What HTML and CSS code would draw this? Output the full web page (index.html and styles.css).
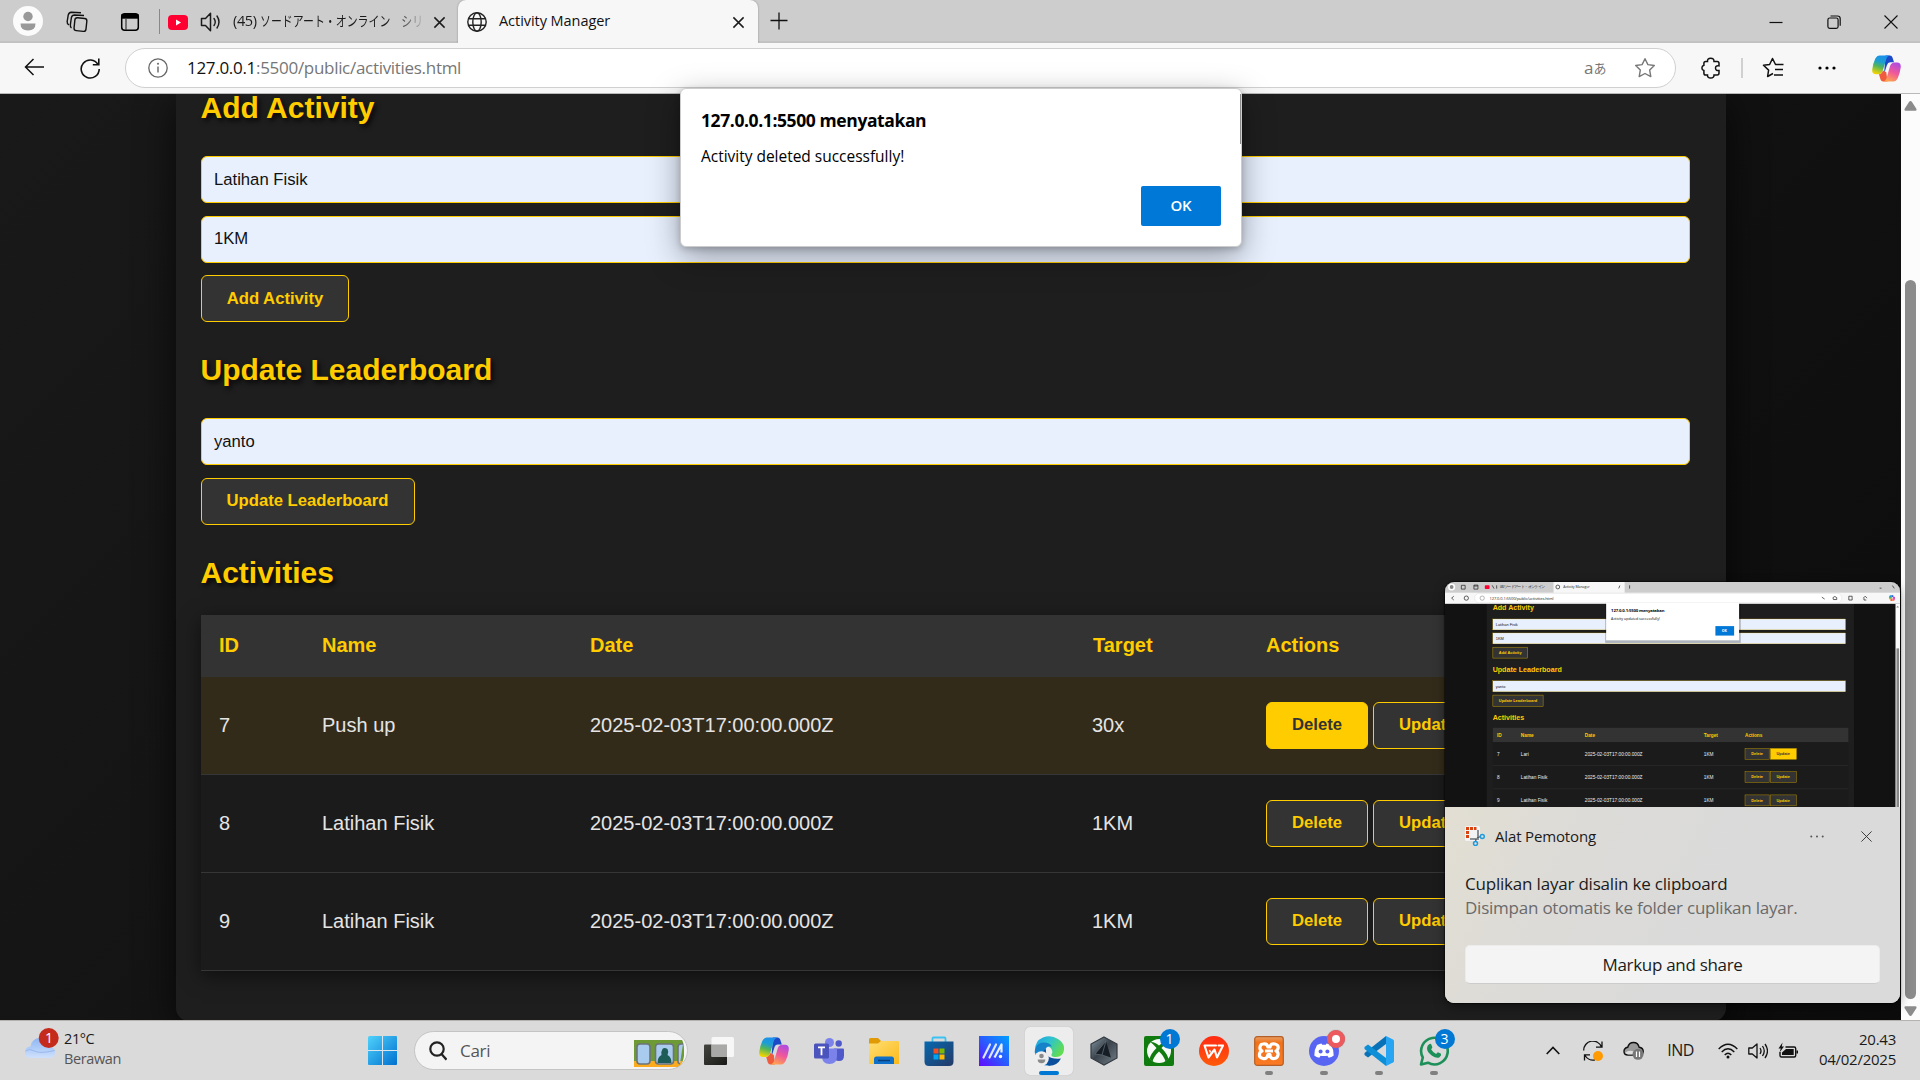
FILE: index.html
```html
<!DOCTYPE html>
<html lang="id">
<head>
<meta charset="utf-8">
<title>Activity Manager</title>
<link rel="stylesheet" href="styles.css">
</head>
<body>
<svg class="defs" width="0" height="0" aria-hidden="true">
  <defs>
    <linearGradient id="cpBlue" x1="0.6" y1="0" x2="0.3" y2="1"><stop offset="0" stop-color="#1b8fee"/><stop offset=".35" stop-color="#1d9fd0"/><stop offset=".6" stop-color="#52b45a"/><stop offset="1" stop-color="#f6d500"/></linearGradient>
    <linearGradient id="cpPink" x1="0.7" y1="0" x2="0.3" y2="1"><stop offset="0" stop-color="#b04be0"/><stop offset=".5" stop-color="#f0589a"/><stop offset="1" stop-color="#ffa64d"/></linearGradient>
    <linearGradient id="win" x1="0" y1="0" x2="1" y2="1"><stop offset="0" stop-color="#4fd2fb"/><stop offset="1" stop-color="#0070d0"/></linearGradient>
    <linearGradient id="fold" x1="0" y1="0" x2="1" y2="1"><stop offset="0" stop-color="#ffdf74"/><stop offset="1" stop-color="#fbb91a"/></linearGradient>
    <linearGradient id="store" x1="0" y1="0" x2="1" y2="1"><stop offset="0" stop-color="#0668b0"/><stop offset="1" stop-color="#253a66"/></linearGradient>
    <linearGradient id="asus" x1="1" y1="0" x2="0" y2="1"><stop offset="0" stop-color="#00a0ff"/><stop offset=".5" stop-color="#2a5bff"/><stop offset="1" stop-color="#6408ff"/></linearGradient>
    <linearGradient id="edgeTop" x1="0" y1="0" x2="1" y2=".5"><stop offset="0" stop-color="#1b9de2"/><stop offset=".5" stop-color="#2ec3cf"/><stop offset="1" stop-color="#60dc55"/></linearGradient>
    <linearGradient id="wps" x1="0" y1="0" x2="0" y2="1"><stop offset="0" stop-color="#ff2a12"/><stop offset="1" stop-color="#ff5a0a"/></linearGradient>
    <linearGradient id="cloud" x1="0" y1="0" x2="0" y2="1"><stop offset="0" stop-color="#8db6f5"/><stop offset="1" stop-color="#cfe0fb"/></linearGradient>
    <linearGradient id="arm" x1="0" y1="0" x2="1" y2="1"><stop offset="0" stop-color="#8798a4"/><stop offset=".45" stop-color="#3a434b"/><stop offset="1" stop-color="#75808a"/></linearGradient>
    <linearGradient id="xam" x1="0" y1="0" x2="0" y2="1"><stop offset="0" stop-color="#e9a067"/><stop offset=".2" stop-color="#f0731c"/><stop offset="1" stop-color="#fb7a24"/></linearGradient>
    <linearGradient id="tvb" x1="0" y1="0" x2="1" y2="1"><stop offset="0" stop-color="#44443f"/><stop offset="1" stop-color="#191917"/></linearGradient>
  </defs>
  <symbol id="copilot" viewBox="0 0 30 28">
    <path fill="#1c49c8" d="M14 0.5h4.500q2 0 2.700 2l1.600 5h-4q-2.500 0-3.400 3l-3 9.500z"/>
    <path fill="url(#cpBlue)" d="M8 .5h11q-3.200.3-4.300 4L11.200 16q-1.200 4-4.700 4H4Q-.5 20 .3 14.500Q1 9 3.300 4Q5 .5 8 .5z"/>
    <path fill="#ef5b3c" d="M16 27.500h-4.500q-2 0-2.700-2L7.200 20q3-.3 4.200-4l3.400 2z"/>
    <path fill="url(#cpPink)" d="M22 27.500H11q3-.3 4.200-4l3.500-12q1.200-3.700 4.700-3.700H26q4.500 0 3.700 5.500q-.7 5.500-3 10.500Q25 27.500 22 27.500z"/>
  </symbol>
  <symbol id="close" viewBox="0 0 14 14"><path d="M1.500 1.500l11 11M12.500 1.500l-11 11" fill="none" stroke="currentColor"/></symbol>
  <symbol id="speaker" viewBox="0 0 22 22"><path d="M1.500 7.500h4l5-5.200v17.400l-5-5.200h-4z" fill="none" stroke="currentColor" stroke-width="1.500" stroke-linejoin="round"/><path d="M14 7.500q2.500 3.500 0 7M17 5q4 6 0 12" fill="none" stroke="currentColor" stroke-width="1.400" stroke-linecap="round"/></symbol>
</svg>

<div class="browser">
  <div class="tabbar">
    <div class="avatar"><svg width="30" height="30" viewBox="0 0 30 30"><circle cx="15" cy="15" r="15" fill="#fbfbfb"/><circle cx="15" cy="10.500" r="4.700" fill="#999"/><path d="M7.500 17.500h15q0 7-7.500 7t-7.500-7z" fill="#999"/></svg></div>
    <svg class="workspaces" width="22" height="22" viewBox="0 0 22 22" fill="none" stroke="#111" stroke-width="1.400"><rect x="8.500" y="7" width="12" height="13" rx="2.500" transform="rotate(6 14 13)"/><path d="M5.500 17Q4 16 4.400 13.500l1-7Q6 4 8.500 4L18 4.500M3 14Q.8 12.500 1.200 10.500l1-6.300Q2.800 1.500 5.300 1.300L15 1.800"/></svg>
    <svg class="tabactions" width="20" height="20" viewBox="0 0 20 20"><rect x="1.700" y="1.700" width="16.600" height="16.600" rx="3" fill="none" stroke="#000" stroke-width="1.500"/><path d="M1.500 2h17v4.700h-17z"/><path d="M6 7v11" stroke="#333" stroke-width="1.200"/></svg>
    <div class="vline"></div>
    <svg class="yt" width="20" height="15" viewBox="0 0 20 15"><rect width="20" height="15" rx="4" fill="#f03"/><path d="M8 4.500l5 3-5 3z" fill="#fff"/></svg>
    <svg class="snd" width="22" height="22"><use href="#speaker"/></svg>
    <div class="tabtitle">(45) <span class="jp">ソードアート・オンライン　シリ</span></div>
    <svg class="tabclose" width="13" height="13"><use href="#close" stroke-width="1.600"/></svg>
    <div class="active-tab">
      <svg width="20" height="20" viewBox="0 0 20 20" fill="none" stroke="#222" stroke-width="1.400"><circle cx="10" cy="10" r="9.200"/><ellipse cx="10" cy="10" rx="4.200" ry="9.200"/><path d="M1.500 6.800h17M1.500 13.200h17"/></svg>
      <span class="active-title">Activity Manager</span>
      <svg class="x" width="13" height="13"><use href="#close" stroke-width="1.600"/></svg>
    </div>
    <svg class="plus" width="18" height="18" viewBox="0 0 18 18"><path d="M9 .5v17M.5 8.500h17" stroke="#111" stroke-width="1.300"/></svg>
    <div class="winctl">
      <svg width="14" height="14" viewBox="0 0 14 14"><path d="M.5 7.500h13" stroke="#111" stroke-width="1.200"/></svg>
      <svg width="14" height="14" viewBox="0 0 14 14" fill="none" stroke="#111" stroke-width="1.200"><rect x=".9" y="3" width="10.200" height="10.300" rx="1.800"/><path d="M3.500 1h7q2.700 0 2.700 2.700v7"/></svg>
      <svg width="14" height="14" viewBox="0 0 14 14"><path d="M.5.5l13 13M13.500.5l-13 13" stroke="#111" stroke-width="1.100"/></svg>
    </div>
  </div>

  <div class="toolbar">
    <svg class="back" width="20" height="18" viewBox="0 0 20 18" fill="none" stroke="#111" stroke-width="1.500"><path d="M20 9H1.500M9.500 1L1.500 9l8 8"/></svg>
    <svg class="reload" width="20" height="21" viewBox="0 0 20 21" fill="none" stroke="#111" stroke-width="1.600"><path d="M18 6.500A9 9 0 1 0 19.200 11M18.800.5v6.200h-6"/></svg>
    <div class="address">
      <svg width="20" height="20" viewBox="0 0 20 20"><circle cx="10" cy="10" r="9.200" fill="none" stroke="#666" stroke-width="1.300"/><path d="M10 8.500v6" stroke="#666" stroke-width="1.400"/><circle cx="10" cy="5.800" r="1" fill="#666"/></svg>
      <span class="url"><b>127.0.0.1</b>:5500/public/activities.html</span>
      <span class="translate">a<i>あ</i></span>
      <svg class="star" width="22" height="22" viewBox="0 0 22 22"><path d="M11 1.700l2.900 5.900 6.400.9-4.600 4.600 1.100 6.500-5.800-3.100-5.800 3.100 1.100-6.500-4.600-4.600 6.400-.9z" fill="none" stroke="#777" stroke-width="1.400" stroke-linejoin="round"/></svg>
    </div>
    <svg class="ext" width="20" height="22" viewBox="0 0 20 22"><path d="M6.500 4.500Q6.300 1.200 9.700 1.200T13 4.500h3.200q1.800 0 1.800 1.800v2.500q-3.500-.6-3.500 2.300t3.500 2.400v2.500q0 2-1.800 2h-3.200q.1 3-3.300 3t-3.200-3H4.700q-1.800 0-1.800-1.800v-2.700Q.9 13 .9 10.900t2-2.600v-2q0-1.800 1.800-1.800z" fill="none" stroke="#111" stroke-width="1.500"/></svg>
    <div class="tdiv"></div>
    <svg class="favs" width="22" height="22" viewBox="0 0 22 22" fill="none" stroke="#111" stroke-width="1.500" stroke-linejoin="round"><path d="M11 16.500l-5.400 3 1-6.400L1.500 8.300l6.100-.8L10.500 1.500l3 6h8M13 12.500h8M12 18h9"/></svg>
    <svg class="more" width="18" height="4" viewBox="0 0 18 4"><circle cx="2" cy="2" r="1.600"/><circle cx="9" cy="2" r="1.600"/><circle cx="16" cy="2" r="1.600"/></svg>
    <svg class="cop" width="29" height="27"><use href="#copilot"/></svg>
  </div>

  <div class="page">
    <main class="viewport">
      <div class="container">
        <h2 class="first">Add Activity</h2>
        <div class="field">Latihan Fisik</div>
        <div class="field second">1KM</div>
        <button class="btn add">Add Activity</button>
        <h2>Update Leaderboard</h2>
        <div class="field">yanto</div>
        <button class="btn upd">Update Leaderboard</button>
        <h2 class="acts">Activities</h2>
        <div class="table">
          <div class="row head"><span>ID</span><span>Name</span><span>Date</span><span>Target</span><span>Actions</span></div>
          <div class="row hover"><span>7</span><span>Push up</span><span>2025-02-03T17:00:00.000Z</span><span>30x</span><span class="actions"><button class="btn on">Delete</button><button class="btn">Update</button></span></div>
          <div class="row"><span>8</span><span>Latihan Fisik</span><span>2025-02-03T17:00:00.000Z</span><span>1KM</span><span class="actions"><button class="btn">Delete</button><button class="btn">Update</button></span></div>
          <div class="row"><span>9</span><span>Latihan Fisik</span><span>2025-02-03T17:00:00.000Z</span><span>1KM</span><span class="actions"><button class="btn">Delete</button><button class="btn">Update</button></span></div>
        </div>
      </div>
    </main>
    <div class="scrollbar">
      <svg width="13" height="10" viewBox="0 0 13 10"><path d="M6.500 0q.9 0 1.500 1l4.500 7q.5 1.700-1 1.700h-10Q0 9.700.5 8L5 1q.6-1 1.500-1z" fill="#8b8b8b"/></svg>
      <div class="thumb"></div>
      <svg class="down" width="13" height="10" viewBox="0 0 13 10"><path d="M6.500 10q.9 0 1.500-1l4.500-7Q13 .3 11.500.3h-10Q0 .3.500 2L5 9q.6 1 1.500 1z" fill="#8b8b8b"/></svg>
    </div>
  </div>
</div>

<div class="dialog">
  <div class="dtitle">127.0.0.1:5500 menyatakan</div>
  <div class="dmsg">Activity deleted successfully!</div>
  <button class="ok">OK</button>
</div>

<div class="toast">
  <svg class="shot" width="455" height="225" viewBox="0 0 1920 949" preserveAspectRatio="none">
    <rect width="1920" height="949" fill="#121212"/>
    <rect x="176" y="90" width="1550" height="859" fill="#1e1e1e"/>
    <rect width="1920" height="44" fill="#cdcdcd"/>
    <rect x="458" width="300" height="46" fill="#f7f7f7"/>
    <rect y="43" width="1920" height="49" fill="#f7f7f7"/>
    <rect x="125" y="48" width="1550" height="40" rx="20" fill="#fff" stroke="#ddd" stroke-width="2"/>
    <circle cx="28" cy="21" r="15" fill="#fff"/><circle cx="28" cy="21" r="8" fill="#888"/>
    <g fill="none" stroke="#222" stroke-width="3"><path d="M69 14h16v16h-16zM122 13h17v17h-17zM122 17h17M199 14l8 14M218 14v14M37 60l-9 8 9 8M738 15l-5 12M779 14v14M1888 15l8 12M1834 26h8"/><circle cx="90" cy="68" r="9"/><circle cx="157" cy="68" r="9" stroke="#999"/><circle cx="476" cy="21" r="8"/><path d="M1590 64l12 8M1637 66l8-5 8 5v8h-14zM1704 60h14v16h-14zM1765 68l8-8 8 8M1768 68v8h10"/></g>
    <rect x="168" y="14" width="20" height="15" rx="3" fill="#f03"/>
    <g font-family="Open Sans, sans-serif" font-size="15" fill="#222"><text x="232" y="27" textLength="190">(45) ソードアート・オンライン</text><text x="499" y="27" textLength="112">Activity Manager</text><text x="188" y="74" font-size="17" textLength="270">127.0.0.1:5500/public/activities.html</text></g>
    <svg x="1872" y="54" width="28" height="28"><use href="#copilot"/></svg>
    <g fill="#e8f0fe" stroke="#ffcc00" stroke-width="1"><rect x="202" y="156" width="1488" height="46"/><rect x="202" y="215" width="1488" height="46"/><rect x="202" y="417" width="1488" height="46"/></g>
    <g fill="#333" stroke="#c9a100" stroke-width="2"><rect x="202" y="275" width="147" height="46"/><rect x="202" y="477" width="212" height="47"/></g>
    <rect x="202" y="615" width="1500" height="61" fill="#333"/><rect x="202" y="676" width="1500" height="273" fill="#1b1b1b"/>
    <path d="M202 774h1500M202 872h1500" stroke="#333" stroke-width="2"/>
    <g fill="#333" stroke="#b89300" stroke-width="2"><rect x="1266" y="702" width="102" height="46"/><rect x="1373" y="702" width="110" height="46" fill="#fc0"/><rect x="1266" y="800" width="102" height="46"/><rect x="1373" y="800" width="110" height="46"/><rect x="1266" y="898" width="102" height="46"/><rect x="1373" y="898" width="110" height="46"/></g>
    <g font-family="Liberation Sans, sans-serif" font-weight="bold" fill="#fc0"><g font-size="30"><text x="201" y="118">Add Activity</text><text x="201" y="380">Update Leaderboard</text><text x="201" y="583">Activities</text></g><g font-size="20"><text x="219" y="652">ID</text><text x="320" y="652">Name</text><text x="590" y="652">Date</text><text x="1092" y="652">Target</text><text x="1266" y="652">Actions</text></g><g font-size="16.700"><text x="227" y="304">Add Activity</text><text x="227" y="506">Update Leaderboard</text><text x="1292" y="730">Delete</text><text x="1399" y="730" fill="#333">Update</text><text x="1292" y="828">Delete</text><text x="1399" y="828">Update</text><text x="1292" y="926">Delete</text><text x="1399" y="926">Update</text></g></g>
    <g font-family="Liberation Sans, sans-serif" font-size="16.700" fill="#111"><text x="214" y="185">Latihan Fisik</text><text x="214" y="244">1KM</text><text x="214" y="446">yanto</text></g>
    <g font-family="Liberation Sans, sans-serif" font-size="20" fill="#eee"><text x="219" y="732">7</text><text x="320" y="732">Lari</text><text x="590" y="732">2025-02-03T17:00:00.000Z</text><text x="1092" y="732">1KM</text><text x="219" y="830">8</text><text x="320" y="830">Latihan Fisik</text><text x="590" y="830">2025-02-03T17:00:00.000Z</text><text x="1092" y="830">1KM</text><text x="219" y="928">9</text><text x="320" y="928">Latihan Fisik</text><text x="590" y="928">2025-02-03T17:00:00.000Z</text><text x="1092" y="928">1KM</text></g>
    <rect x="676" y="92" width="572" height="165" fill="#000" opacity=".25"/><rect x="680" y="88" width="561" height="158" fill="#fff"/><rect x="1141" y="186" width="79" height="40" fill="#0078d7"/>
    <g font-family="Open Sans, sans-serif"><text x="701" y="127" font-size="18" font-weight="bold" textLength="225">127.0.0.1:5500 menyatakan</text><text x="701" y="162" font-size="15" textLength="206">Activity updated successfully!</text><text x="1168" y="212" font-size="15" font-weight="bold" fill="#fff">OK</text></g>
    <rect x="1901" y="92" width="19" height="857" fill="#fcfcfc"/><rect x="1905" y="280" width="11" height="669" fill="#888"/><path d="M1904 108l6-8 6 8z" fill="#888"/>
  </svg>
  <div class="tbody">
    <div class="thead">
      <svg width="20" height="20" viewBox="0 0 20 20"><rect width="15" height="15" rx="1.500" fill="#f3f3f6"/><path d="M1 1h3v3H1zM5 1h3v3H5zM9 1h2.500v3H9zM1 5h3v3H1zM1 9h3v3H1z" fill="#d9430f"/><path d="M13 4v9H5" fill="none" stroke="#8a9096" stroke-width="2"/><path d="M12 12l3.500-1.500M11 13l-.5 3" stroke="#555" stroke-width="1.300"/><circle cx="17.300" cy="10.500" r="2" fill="none" stroke="#1e9be0" stroke-width="1.500"/><circle cx="10.500" cy="17.500" r="2" fill="none" stroke="#1e9be0" stroke-width="1.500"/></svg>
      <span class="tapp">Alat Pemotong</span>
      <svg class="tdots" width="14" height="3" viewBox="0 0 14 3" fill="#555"><circle cx="1.300" cy="1.500" r="1"/><circle cx="7" cy="1.500" r="1"/><circle cx="12.700" cy="1.500" r="1"/></svg>
      <svg class="tx" width="13" height="13"><use href="#close"/></svg>
    </div>
    <div class="tmain">Cuplikan layar disalin ke clipboard</div>
    <div class="tsub">Disimpan otomatis ke folder cuplikan layar.</div>
    <button class="tbtn">Markup and share</button>
  </div>
</div>

<footer class="taskbar">
  <div class="weather">
    <svg width="36" height="32" viewBox="0 0 36 32"><path d="M7 30q-6 0-6-5.500t5.500-6Q8 10 16 10t9 8.500q6 .5 6 6t-5 5.500z" fill="url(#cloud)"/><path d="M1.500 23q4-3 9 0t20.300-.5" stroke="#8fb0ea" fill="none" opacity=".8"/><circle cx="24.700" cy="10" r="10" fill="#c42b1c"/><text x="21" y="15.300" font-family="Open Sans, sans-serif" font-size="14" fill="#fff">1</text></svg>
    <div class="wtext"><div class="deg">21°C</div><div class="cond">Berawan</div></div>
  </div>
  <svg class="start" width="29" height="29" viewBox="0 0 29 29" fill="url(#win)"><path d="M0 1.500Q0 0 1.500 0H28q1 0 1 1v27q0 1-1 1H1q-1 0-1-1z"/><path d="M14 0h1v29h-1zM0 14h29v1H0z" fill="#dce6ec"/></svg>
  <div class="search">
    <svg width="18" height="20" viewBox="0 0 18 20" fill="none" stroke="#222" stroke-width="2.200"><circle cx="8" cy="8" r="6.700"/><path d="M12.500 13l5 5.700"/></svg>
    <span>Cari</span>
    <svg class="train" width="50" height="27" viewBox="0 0 50 27"><path d="M0 0h48q2 3 2 10v6q-1 8-7 11H0z" fill="#6d9a35"/><path d="M0 21h49q-2 4-6 6H0z" fill="#fbab1d"/><g stroke="#6c747c" stroke-width="1.600" fill="#a9cbee"><rect x="3" y="4" width="13" height="20" rx="3"/><rect x="21.500" y="4" width="18" height="20" rx="3"/><path d="M49 4h-2q-3 0-3 3v14q0 3 2 2.500"/></g><path d="M23.500 23q0-6 4-8-.5-4 1-6t5 0q1.500 3 0 6 4 2 4 8z" fill="#1e5c57"/></svg>
  </div>
  <div class="apps">
    <div class="slot"><svg width="30" height="28" viewBox="0 0 30 28"><rect y="7.500" width="23" height="20.500" rx="1" fill="url(#tvb)"/><rect x="7.500" width="22.500" height="20" rx="1.500" fill="#fafafa" opacity=".88"/><path d="M7.500 7.500H23V20H7.500z" fill="#a9a9a7"/></svg></div>
    <div class="slot"><svg width="30" height="28"><use href="#copilot"/></svg></div>
    <div class="slot"><svg width="30" height="28" viewBox="0 0 30 28"><circle cx="15.500" cy="5.500" r="4.500" fill="#7b83eb"/><circle cx="24.700" cy="6.500" r="3.200" fill="#5059c9"/><path d="M20 11.500h9q1 0 1 1v6q0 5.500-5 5.500t-5-5z" fill="#5059c9"/><path d="M8 11.500h14q1 0 1 1V19q0 8-7.500 8T8 19z" fill="#7b83eb"/><rect y="6.500" width="15" height="15" rx="1.500" fill="#4b53bc"/><path d="M4 10.300h7M7.500 10.300v8" stroke="#fff" stroke-width="1.800"/></svg></div>
    <div class="slot"><svg width="30" height="28" viewBox="0 0 30 28"><path d="M0 2.500Q0 1 1.500 1H9l3 3v5H0z" fill="#e09a05"/><path d="M0 6.500h9l3-2.500h17q1 0 1 1v22H1q-1 0-1-1z" fill="url(#fold)"/><path d="M5 27v-5q0-2.500 2.500-2.500h15Q25 19.500 25 22v5z" fill="#0e70c8"/><path d="M9 23.500h12" stroke="#0b3f7c" stroke-width="1.500"/></svg></div>
    <div class="slot"><svg width="30" height="30" viewBox="0 0 30 30"><path d="M8.500 7V2.500q0-1 1-1h11q1 0 1 1V7" fill="none" stroke="#39c2f2" stroke-width="1.800"/><path d="M.5 5.500h29v20q0 4.500-4.500 4.500H5Q.5 30 .5 25.500z" fill="url(#store)"/><path fill="#f25022" d="M9.500 12.500h5v5h-5z"/><path fill="#7fba00" d="M15.500 12.500h5v5h-5z"/><path fill="#00a4ef" d="M9.500 18.500h5v5h-5z"/><path fill="#ffb900" d="M15.500 18.500h5v5h-5z"/></svg></div>
    <div class="slot"><svg width="30" height="30" viewBox="0 0 30 30"><path fill="url(#asus)" d="M0 0h30v30H0z"/><path d="M4.500 21.500L11 8.500M10.500 21.500L17 8.500" stroke="#dbe6ff" stroke-width="2.200" stroke-linecap="round"/><path d="M15.500 21.500L22.500 8.500v8" fill="none" stroke="#e9f0ff" stroke-width="2.200" stroke-linejoin="round"/><circle cx="21.500" cy="20.500" r="1.700" fill="#fff"/></svg></div>
    <div class="slot current"><svg width="30" height="30" viewBox="0 0 30 30"><path d="M1 17Q0 5 9 1.500Q17-1.500 24 3t6 11q-1 7-8 7-5 0-4.500-2.500 1.500-2 .3-4.800-2-4.200-7.800-3.700Q3 10.500 1 17z" fill="url(#edgeTop)"/><path d="M1 14q2-8 9-7.500 5.500.2 8 4Q12 9 11 15q-1 8 6 14-8 2-13-4-4-5-3-11z" fill="#1582c9"/><path d="M12 13q-1.500 11 15 9.500Q23 30 15 29.700q-8-3-7-11 .5-4 4-5.700z" fill="#0c4f9c"/><circle cx="7.500" cy="22.500" r="7.300" fill="#eee"/><circle cx="7.500" cy="20" r="2.300" fill="#8a8a8a"/><path d="M3.700 23.500h7.600q0 3.800-3.800 3.800t-3.800-3.800z" fill="#8a8a8a"/></svg></div>
    <div class="slot"><svg width="28" height="30" viewBox="0 0 28 30"><path d="M14 1l13 7v14l-13 7L1 22V8z" fill="url(#arm)" stroke="#333b42" stroke-width="1.200"/><path d="M16 5l5 17-9-3-7-1z" fill="#171d24"/><path d="M16 5L5 18l7 1 4-14M12 19l9 3" stroke="#5c6872" stroke-width=".8" fill="none"/></svg></div>
    <div class="slot"><svg width="30" height="30" viewBox="0 0 30 30"><rect width="30" height="30" rx="2" fill="#107c10"/><circle cx="15" cy="15" r="12" fill="#f6fbf6"/><path d="M6.500 6q4-.5 8.500 3.500Q19.500 5.500 23.500 6L20 9.500q-2 1.500-2.500 2.500 6 6 7 11l-3 2.500Q20 20 15 15.500 10 20 8.500 25.500l-3-2.500q1-5 7-11Q10 9 6.500 6z" fill="#107c10"/></svg><span class="badge">1</span></div>
    <div class="slot"><svg width="30" height="30" viewBox="0 0 30 30"><circle cx="15" cy="15" r="15" fill="url(#wps)"/><path d="M17 9.500H5.500l4 12 6-8 2.500 8 6-12h-4.500" fill="none" stroke="#fff" stroke-width="2.100" stroke-linejoin="round" stroke-linecap="round"/><path d="M10.500 14l1 2.500" stroke="#fff" stroke-width="1.500"/></svg></div>
    <div class="slot run"><svg width="30" height="30" viewBox="0 0 30 30"><rect x=".7" y=".7" width="28.600" height="28.600" rx="2.500" fill="url(#xam)" stroke="#b55e25" stroke-width="1.200"/><path d="M9 8q4-1 5 3h2q1-4 5-3t3 4.500q-.5 2-2 2.500 2.500 1 2 4t-3.500 3.500Q16 23 16 18.500h-2q-1 5-5 4T5.500 18.500Q5.500 16 8 15 5.500 14 6 11t3-3z" fill="none" stroke="#fff" stroke-width="3.200" stroke-linejoin="round"/><path d="M11 15h8" stroke="#fff" stroke-width="3"/></svg></div>
    <div class="slot run"><svg width="30" height="30" viewBox="0 0 30 30"><circle cx="15" cy="15" r="15" fill="#5865f2"/><path d="M8 9q3-1.500 4.500-1.500l.7 1.300h3.600l.7-1.300Q19 7.500 22 9q3 5 2.700 10.500-2 1.800-5 2.200l-1.300-2q-3.400.7-6.800 0l-1.300 2q-3-.4-5-2.200Q5 14 8 9z" fill="#fff"/><circle cx="11.600" cy="15.500" r="2" fill="#5865f2"/><circle cx="18.400" cy="15.500" r="2" fill="#5865f2"/></svg><span class="badge live"></span></div>
    <div class="slot run"><svg width="30" height="30" viewBox="0 0 30 30"><path d="M22 0v8L4 21.500 0.500 19v-2z" fill="#0872b8"/><path d="M22 30v-8L4 8.500.5 11v2z" fill="#0d8fd8"/><path d="M22 0l7 3.500q1 .5 1 1.500v20q0 1-1 1.500L22 30z" fill="#27a5f2"/></svg></div>
    <div class="slot run"><svg width="30" height="30" viewBox="0 0 30 30"><path d="M2 28.500l1.800-7A13.300 13.300 0 1 1 9 26.700z" fill="none" stroke="#1d8f58" stroke-width="2.600" stroke-linejoin="round"/><path d="M10.500 8q1.300-.6 1.800.6l1 2.500q.2.800-1.200 2.200 1.800 3.300 5 4.600 1.300-1.600 1.900-1.600l3 1.500q.7 2-1.500 3.400-3 1.500-7.500-1.500Q7.800 16 8 12q.3-2.800 2.500-4z" fill="#1d8f58"/></svg><span class="badge">3</span></div>
  </div>
  <div class="tray">
    <div class="t40"><svg width="14" height="9" viewBox="0 0 14 9"><path d="M.7 8L7 1.500 13.300 8" fill="none" stroke="#111" stroke-width="1.600"/></svg></div>
    <div class="t40"><svg width="20" height="20" viewBox="0 0 20 20"><path d="M.7 9.500A9.200 9.200 0 0 1 18.500 6M19 .5v5.700h-6M12 18.800A9.200 9.200 0 0 1 1.800 14M1.500 19.500v-5.700H7" fill="none" stroke="#111" stroke-width="1.300"/><circle cx="15" cy="15" r="5" fill="#ff9a00"/></svg></div>
    <div class="t40"><svg width="21" height="19" viewBox="0 0 21 19"><path d="M5 14Q1 14 1 10.500 1 7 4.700 6.300 6 1.500 10.500 1.500t5.700 4.800q4 .7 4 4 0 3.700-4 3.700z" fill="#9a9a9a" stroke="#111" stroke-width="1.400"/><path d="M2 12q5-5 14 1.500H5z" fill="#ddd"/><circle cx="15" cy="13.300" r="5.500" fill="#777"/><path d="M13.500 10.500v5.500M16.500 10.500v5.500" stroke="#fff" stroke-width="1.200"/></svg></div>
    <div class="ind">IND</div>
    <div class="t30"><svg width="20" height="16" viewBox="0 0 20 16" fill="none" stroke="#111" stroke-width="1.400"><path d="M.7 6q9.300-9.500 18.600 0M3.700 9q6.300-6.500 12.600 0M6.700 12q3.300-3.500 6.600 0"/><circle cx="10" cy="14" r="1.500" fill="#111" stroke="none"/></svg></div>
    <div class="t30"><svg width="20" height="18" viewBox="0 0 20 18" fill="none" stroke="#111" stroke-width="1.300"><path d="M.8 6h3.500L9 2v14l-4.700-4H.8zM12 6q2 3 0 6M14.500 4q3.500 5 0 10M17 2q5 7 0 14" stroke-linejoin="round"/></svg></div>
    <div class="t30"><svg width="20" height="17" viewBox="0 0 20 17"><path d="M7.500 5h8.700q1.500 0 1.500 1.500v7q0 1.500-1.500 1.500H3.500Q2 15 2 13.500V10" fill="none" stroke="#111" stroke-width="1.400"/><path d="M8 7h7.700v6H4v-2.500zM18.500 8.500h1.500v3h-1.500z" fill="#111"/><path d="M4.500.5L.5 6.500h2.300L1.500 10.500l4.500-6H3.800z" fill="#111"/></svg></div>
    <div class="clock"><div class="time">20.43</div><div class="date">04/02/2025</div></div>
  </div>
</footer>
</body>
</html>
```

FILE: styles.css
```css
* { box-sizing: border-box; }
html, body { margin: 0; height: 100%; overflow: hidden; }
body {
  width: 1920px;
  height: 1080px;
  display: flex;
  flex-direction: column;
  background: #111;
  font-family: "Open Sans", "Noto Sans CJK JP", sans-serif;
  color: #1b1b1b;
}
svg { display: block; flex: none; }
.defs { position: absolute; }
button { margin: 0; font-family: inherit; }

/* browser chrome */
.browser { height: 1020px; display: flex; flex-direction: column; }
.tabbar {
  height: 43px;
  flex: none;
  display: flex;
  align-items: center;
  background: #cdcdcd;
  box-shadow: inset 0 -2px 0 #c2c2c2;
}
.avatar { margin: 0 0 1px 13px; }
.workspaces { margin-left: 23px; }
.tabactions { margin-left: 32px; }
.vline { width: 1px; height: 25px; margin-left: 19px; background: #888; }
.yt { margin: 1px 0 0 8px; }
.snd { margin-left: 12px; }
.tabtitle {
  width: 193px;
  margin-left: 11px;
  padding-bottom: 2px;
  font-size: 14.500px;
  line-height: 20px;
  letter-spacing: -.4px;
  white-space: pre;
  overflow: hidden;
  -webkit-mask-image: linear-gradient(90deg, #000 162px, transparent 194px);
  mask-image: linear-gradient(90deg, #000 162px, transparent 194px);
}
.jp {
  display: inline-block;
  font-family: "Noto Sans CJK JP", sans-serif;
  font-size: 14px;
  letter-spacing: 0;
  line-height: 20px;
  transform: scaleX(.78);
  transform-origin: left;
}
.tabclose { margin: 1px 0 0 7px; }
.active-tab {
  width: 300px;
  height: 43px;
  margin-left: 12px;
  padding-left: 9px;
  display: flex;
  align-items: center;
  background: #f7f7f7;
  border-radius: 8px 8px 0 0;
  box-shadow: 0 0 2px rgba(0, 0, 0, .35);
  clip-path: inset(0 -3px 0 -3px);
}
.active-title { margin-left: 12px; font-size: 14.500px; line-height: 20px; letter-spacing: -.05px; flex: 1; padding-bottom: 2px; color: #111; }
.active-tab .x { margin: 1px 13px 0 0; }
.plus { margin-left: 12px; margin-bottom: 2px; }
.winctl { margin-left: auto; padding-right: 22px; display: flex; gap: 43.500px; }

.toolbar {
  height: 51px;
  flex: none;
  display: flex;
  align-items: center;
  background: #f7f7f7;
  border-bottom: 1px solid #b9b9b9;
}
.back { margin-left: 24px; margin-bottom: 2px; }
.reload { margin-left: 36px; }
.address {
  width: 1551px;
  height: 40px;
  margin-left: 25px;
  padding: 0 19px 0 22px;
  display: flex;
  align-items: center;
  background: #fff;
  border: 1px solid #d0d0d0;
  border-radius: 20px;
}
.url { margin-left: 19px; flex: 1; font-size: 17px; line-height: 24px; padding-bottom: 1px; color: #767676; letter-spacing: -.3px; }
.url b { font-weight: 400; color: #111; }
.translate { width: 22px; font-size: 17px; line-height: 22px; color: #777; display: flex; align-items: center; }
.translate i { font-style: normal; font-size: 13px; }
.star { margin-left: 28px; }
.ext { margin-left: 25px; }
.tdiv { width: 2px; height: 20px; margin-left: 20px; background: #d0d0d0; }
.favs { margin-left: 19px; }
.more { margin-left: 34px; }
.cop { margin-left: 36px; }

/* web page */
.page { flex: 1; display: flex; min-height: 0; }
.viewport {
  width: 1901px;
  overflow: hidden;
  background: linear-gradient(135deg, #191919, #0c0c0c);
  font-family: "Liberation Sans", Arial, sans-serif;
}
.container {
  width: 1550px;
  height: 927px;
  margin-left: 176px;
  padding: 1px 25px 0;
  background: #1e1e1e;
  border-radius: 0 0 13px 13px;
  box-shadow: 0 10px 38px rgba(0, 0, 0, .7);
}
h2 {
  margin: 35px 0 35px -.5px;
  font-size: 30px;
  line-height: 26px;
  color: #fc0;
  text-shadow: 2.500px 2.500px 5px rgba(0, 0, 0, .8);
}
h2.first { margin-top: 0; }
h2.acts { margin: 35px 0 29px -.5px; }
.field {
  width: 1489px;
  height: 47px;
  padding: 0 12px;
  font-size: 16.667px;
  line-height: 45px;
  color: #111;
  background: #e8f0fe;
  border: 1px solid #fc0;
  border-radius: 6px;
}
.field.second { margin-top: 13px; line-height: 43px; }
.btn {
  display: block;
  height: 47px;
  padding: 0 25px 1px;
  font-size: 16.667px;
  font-weight: 700;
  line-height: 44px;
  color: #fc0;
  background: #333;
  border: 1px solid #fc0;
  border-radius: 6px;
  white-space: nowrap;
}
.btn.add { width: 148px; margin-top: 12px; padding: 0 24px; line-height: 45px; }
.btn.upd { margin-top: 13px; padding: 0 25.500px 1px 24.500px; }
.btn.on { background: #fc0; color: #333; }
.table { width: 1500px; background: #1b1b1b; box-shadow: 0 5px 19px rgba(0, 0, 0, .5); }
.row {
  height: 98px;
  padding-left: 18px;
  display: grid;
  grid-template-columns: 103px 268px 502px 174px 1fr;
  align-items: center;
  font-size: 20px;
  line-height: 24px;
  color: #e4e4e4;
  border-bottom: 1px solid #363636;
}
.row > span { padding-bottom: 2px; }
.row > span.actions { display: flex; gap: 5px; padding: 0; }
.row.head { height: 62px; font-weight: 700; color: #fc0; background: #333; border: 0; }
.row.head span:nth-child(4) { padding-left: 1px; }
.row.hover { background: #332b1a; }

.scrollbar {
  width: 19px;
  padding: 7px 0 4px;
  display: flex;
  flex-direction: column;
  align-items: center;
  background: #fcfcfc;
}
.thumb { width: 11px; height: 719px; margin: 169px 0 0; border-radius: 6px; background: #8b8b8b; }
.down { margin-top: auto; }

/* alert box above the page */
.dialog {
  position: absolute;
  left: 680px;
  top: 88px;
  width: 562px;
  height: 159px;
  padding: 19px 20px 0 20px;
  background: #fff;
  border: 1px solid #ccc;
  border-radius: 6px;
  box-shadow: 0 10px 32px rgba(0, 0, 0, .36), 0 2px 6px rgba(0, 0, 0, .2);
  color: #000;
}
.dialog::after { content: ""; position: absolute; right: 0; top: 5px; width: 1px; height: 50px; background: #8b8b8b; }
.dtitle { font-size: 17.500px; font-weight: 700; line-height: 24px; letter-spacing: -.4px; }
.dmsg { margin-top: 12px; font-size: 15.500px; line-height: 24px; letter-spacing: -.02px; }
.ok { display: block; margin: 18px 0 0 auto; width: 80px; height: 40px; padding: 0 0 2px; border: 0; border-radius: 2px; background: #0078d7; color: #fff; font-size: 15px; font-weight: 600; letter-spacing: -.3px; }

/* notification */
.toast {
  position: absolute;
  left: 1445px;
  top: 582px;
  width: 455px;
  height: 421px;
  border-radius: 9px;
  overflow: hidden;
  background: #dbdbdb;
  box-shadow: 0 0 1px 1px rgba(0, 0, 0, .5), 0 4px 12px rgba(0, 0, 0, .4);
}
.tbody {
  height: 196px;
  padding: 0 20px;
  background: linear-gradient(115deg, #e2ded2 0, #dcdbd8 28%, #dadada 60%);
}
.thead { height: 58px; display: flex; align-items: center; }
.tapp { margin-left: 10px; padding-bottom: 1px; flex: 1; font-size: 15px; line-height: 20px; letter-spacing: -.15px; }
.tdots { margin-right: 36px; }
.tx { margin-right: 7px; color: #333; }
.tmain, .tsub { font-size: 17px; line-height: 24px; letter-spacing: -.2px; white-space: nowrap; }
.tmain { margin-top: 7px; }
.tsub { color: #6a6a6a; letter-spacing: -.23px; }
.tbtn { display: block; width: 415px; height: 39px; margin-top: 25px; padding: 0; border: 1px solid #ececec; border-bottom-color: #ccc; border-radius: 5px; background: #f4f4f4; color: #1b1b1b; font-size: 17px; letter-spacing: -.3px; }

/* taskbar */
.taskbar {
  height: 60px;
  display: flex;
  align-items: center;
  background: #dadada;
  border-top: 1px solid #b5b1ae;
}
.weather { width: 344px; margin-left: 24px; display: flex; align-items: center; }
.weather > svg { margin-bottom: 13px; }
.wtext { margin-left: 4px; padding-bottom: 3px; font-size: 14.500px; line-height: 20px; letter-spacing: -.4px; }
.cond { color: #555; }
.search {
  width: 274px;
  height: 39px;
  margin-left: 17px;
  padding: 0 3px 0 14px;
  display: flex;
  align-items: center;
  background: #f4f4f4;
  border: 1px solid #c4c4c4;
  border-radius: 20px;
}
.search span { margin-left: 13px; flex: 1; font-size: 17px; line-height: 24px; color: #555; letter-spacing: -.3px; }
.train { margin-top: 6px; }
.apps { display: flex; margin-left: 3.500px; }
.slot { position: relative; width: 55px; height: 48px; display: flex; align-items: center; justify-content: center; }
.slot.current { width: 48px; margin: 0 3.500px; background: #ededed; border-radius: 5px; box-shadow: 0 0 1px #aaa; }
.slot.current::after, .slot.run::after { content: ""; position: absolute; bottom: 0; left: 50%; width: 8px; height: 4px; margin-left: -4px; border-radius: 2px; background: #808080; }
.slot.current::after { width: 20px; margin-left: -10px; background: #0078d4; }
.badge { position: absolute; left: 28px; top: 2px; width: 20px; height: 20px; border-radius: 50%; background: #0078d4; color: #fff; font-size: 14px; line-height: 20px; text-align: center; }
.badge.live { left: 30px; width: 18px; height: 18px; top: 3px; background: #fff; border: 5px solid #ed5a5e; box-shadow: 0 0 1px #777; }
.tray { margin-left: auto; padding-right: 24px; display: flex; align-items: center; font-size: 15px; }
.tray > div { display: flex; justify-content: center; align-items: center; }
.tray .t40 { width: 40px; }
.tray .t30 { width: 30px; }
.tray .ind { width: 55px; margin-right: 5px; padding-bottom: 1px; font-size: 16px; letter-spacing: -.5px; }
.tray .clock { width: 93px; padding-bottom: 4px; flex-direction: column; align-items: flex-end; line-height: 20px; letter-spacing: -.25px; white-space: nowrap; }
```
